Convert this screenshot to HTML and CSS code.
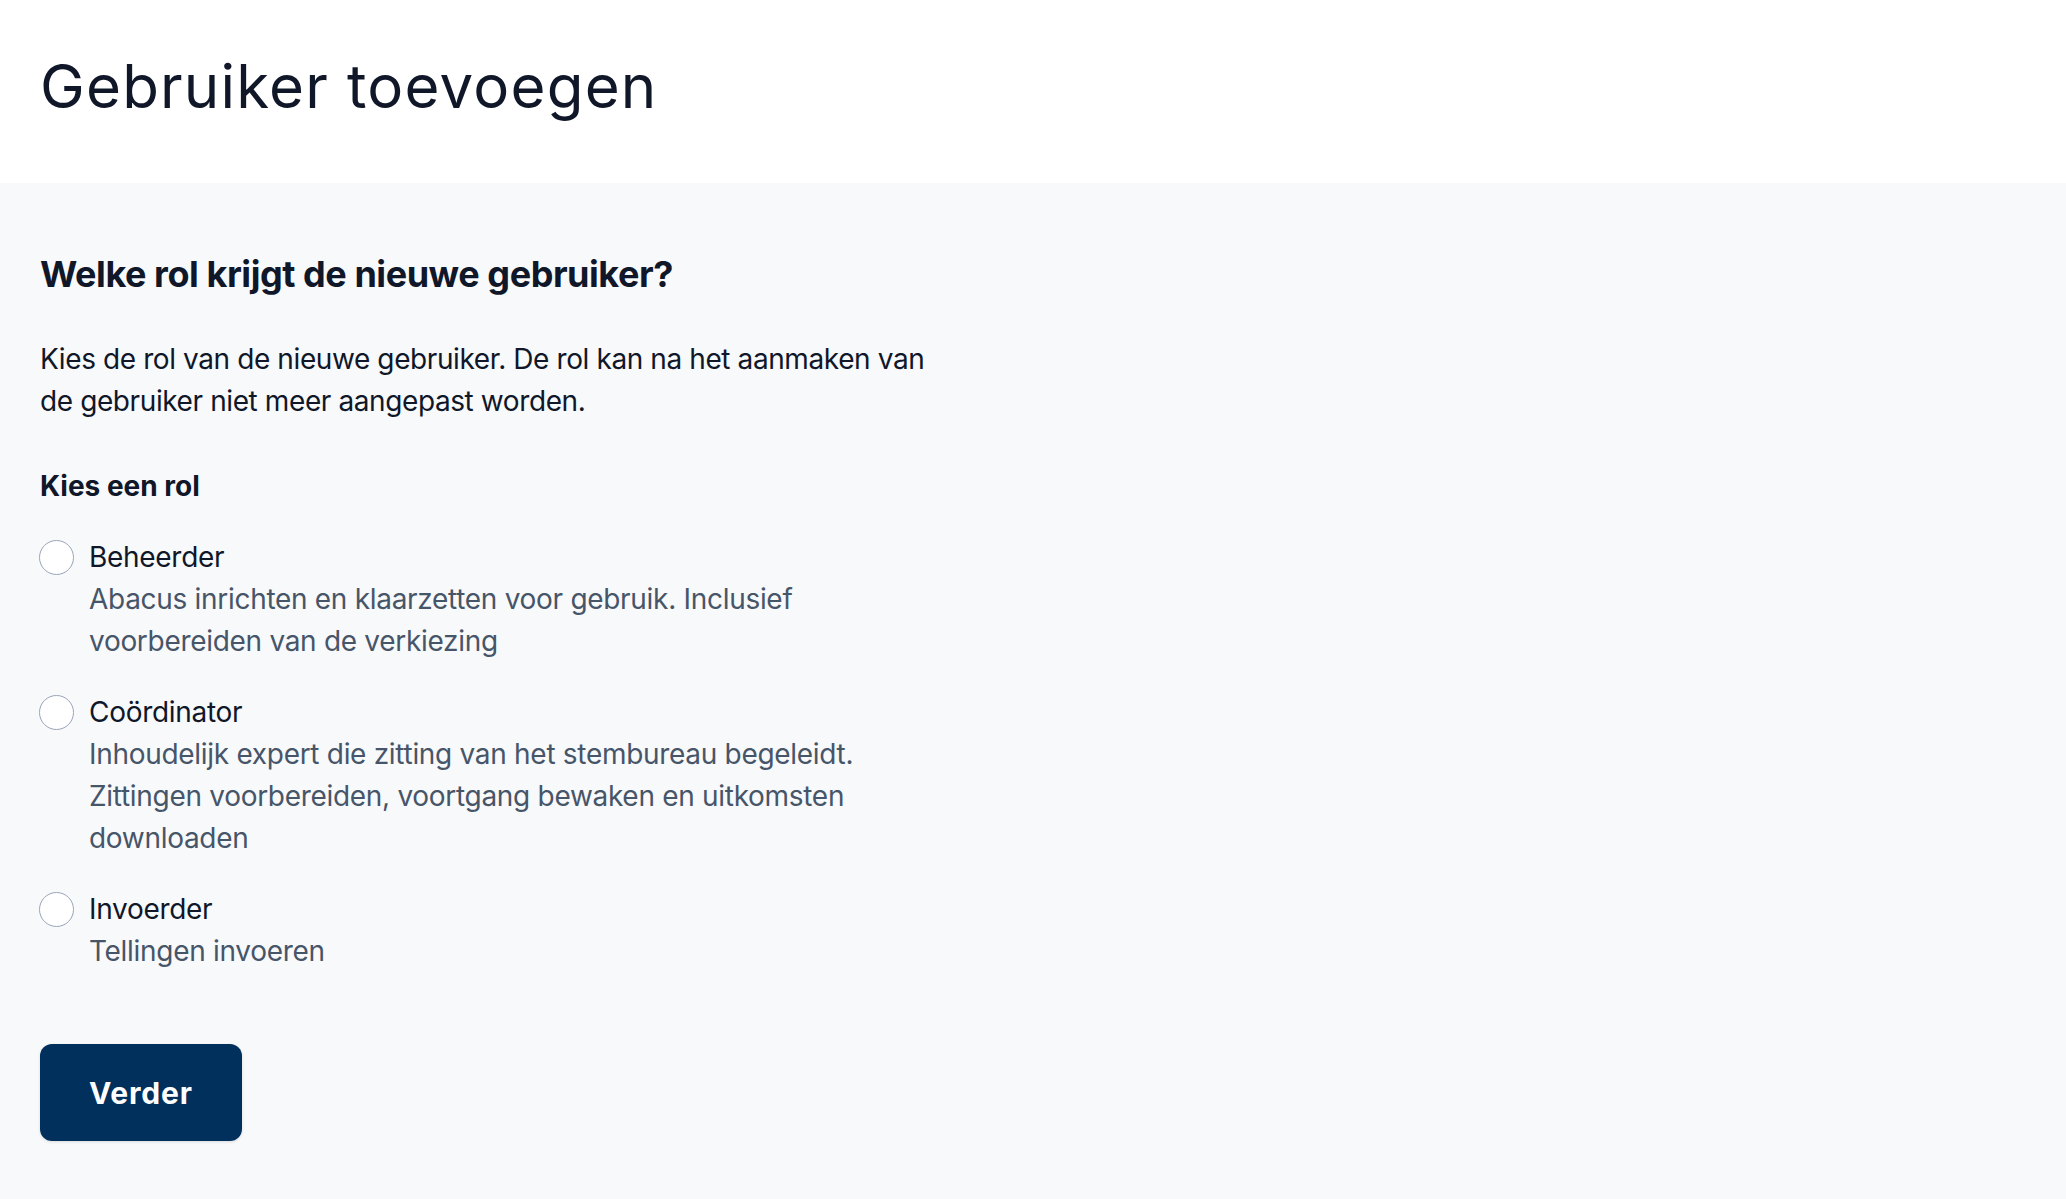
FILE: index.html
```html
<!DOCTYPE html>
<html lang="nl">
<head>
    <meta charset="UTF-8">
    <meta name="viewport" content="width=device-width, initial-scale=1.0">
    <title>Gebruiker toevoegen - Abacus</title>
    <link rel="stylesheet" href="styles.css">
</head>
<body>

    <header class="page-header">
        <h1>Gebruiker toevoegen</h1>
    </header>

    <main class="content">
        <form class="role-form">
            <h2>Welke rol krijgt de nieuwe gebruiker?</h2>
            <p class="intro">Kies de rol van de nieuwe gebruiker. De rol kan na het aanmaken van de gebruiker niet meer aangepast worden.</p>

            <fieldset class="role-choice">
                <legend>Kies een rol</legend>

                <label class="role-option">
                    <input type="radio" name="role" value="administrator">
                    <span class="role-text">
                        <span class="role-name">Beheerder</span>
                        <span class="role-desc">Abacus inrichten en klaarzetten voor gebruik. Inclusief voorbereiden van de verkiezing</span>
                    </span>
                </label>

                <label class="role-option">
                    <input type="radio" name="role" value="coordinator">
                    <span class="role-text">
                        <span class="role-name">Coördinator</span>
                        <span class="role-desc">Inhoudelijk expert die zitting van het stembureau begeleidt. Zittingen voorbereiden, voortgang bewaken en uitkomsten downloaden</span>
                    </span>
                </label>

                <label class="role-option">
                    <input type="radio" name="role" value="typist">
                    <span class="role-text">
                        <span class="role-name">Invoerder</span>
                        <span class="role-desc">Tellingen invoeren</span>
                    </span>
                </label>
            </fieldset>

            <button type="button" class="btn-primary">Verder</button>
        </form>
    </main>

</body>
</html>
```

FILE: styles.css
```css
body {
    font-family: 'Inter', 'Lato', sans-serif;
    margin: 0;
    padding: 0;
    color: #0f1729;
    background-color: #f8f9fb;
}

.page-header {
    background-color: #FFFFFF;
    padding: 50px 40px 61px;
}

.page-header h1 {
    margin: 0;
    font-size: 60px;
    font-weight: 400;
    line-height: 72px;
    letter-spacing: 1.2px;
}

.content {
    padding: 70px 40px 60px;
}

.role-form {
    max-width: 900px;
}

.role-form h2 {
    margin: 0;
    font-size: 36px;
    font-weight: 700;
    line-height: 43px;
    letter-spacing: -0.45px;
}

.intro {
    margin: 42px 0 0;
    font-size: 28px;
    line-height: 42px;
    letter-spacing: -0.4px;
}

.role-choice {
    border: none;
    margin: 43px 0 0;
    padding: 0;
}

.role-choice legend {
    padding: 0;
    font-size: 28px;
    font-weight: 700;
    line-height: 42px;
    margin-bottom: 29px;
}

.role-option {
    display: flex;
    gap: 15px;
    align-items: flex-start;
    margin-bottom: 29px;
    cursor: pointer;
}

.role-option input[type="radio"] {
    appearance: none;
    -webkit-appearance: none;
    flex: none;
    width: 35px;
    height: 35px;
    margin: 4px 0 0 -1px;
    border: 1.5px solid #9aa5b8;
    border-radius: 50%;
    background-color: #FFFFFF;
    box-sizing: border-box;
}

.role-option input[type="radio"]:checked {
    border: 10px solid #01305c;
}

.role-text {
    display: flex;
    flex-direction: column;
    font-size: 28px;
    line-height: 42px;
    letter-spacing: -0.3px;
}

.role-desc {
    color: #475569;
}

.btn-primary {
    margin-top: 43px;
    height: 97px;
    padding: 0 49px;
    font-family: inherit;
    font-size: 30px;
    font-weight: 700;
    letter-spacing: 0.8px;
    color: #FFFFFF;
    background-color: #01305c;
    border: none;
    border-radius: 12px;
    box-shadow: 0 1px 3px rgba(0, 0, 0, 0.12);
    cursor: pointer;
}

.btn-primary:hover {
    background-color: #0a3f73;
}
```
